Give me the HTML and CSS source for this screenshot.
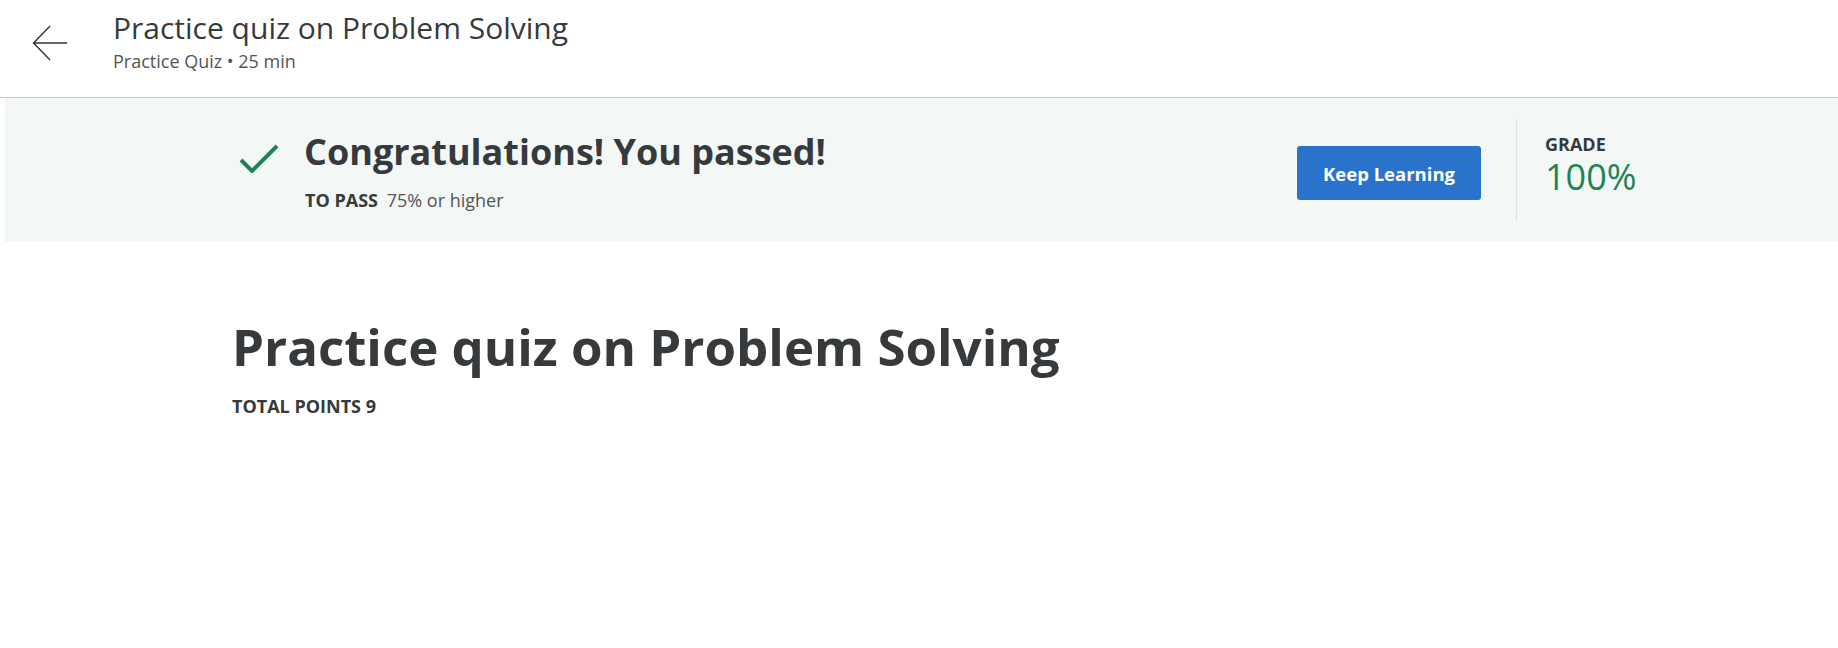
FILE: index.html
```html
<!DOCTYPE html>
<html lang="en">
<head>
<meta charset="utf-8">
<title>Practice quiz on Problem Solving</title>
<link rel="stylesheet" href="styles.css">
</head>
<body>
<header class="top">
  <svg class="back" width="36" height="36" viewBox="0 0 36 36" aria-hidden="true">
    <path d="M35 18H1.5M18 1L1.5 18L18 35" fill="none" stroke="#333" stroke-width="1.4"/>
  </svg>
  <div class="top-text">
    <div class="top-title">Practice quiz on Problem Solving</div>
    <div class="top-sub">Practice Quiz • 25 min</div>
  </div>
</header>
<section class="banner">
  <div class="result">
    <svg class="check" width="40" height="30" viewBox="0 0 40 30" aria-hidden="true">
      <path d="M2 17L13 28L38 3" fill="none" stroke="#1f8354" stroke-width="4"/>
    </svg>
    <div class="result-text">
      <div class="congrats">Congratulations! You passed!</div>
      <div class="topass"><b>TO PASS</b> 75% or higher</div>
    </div>
  </div>
  <button class="keep">Keep Learning</button>
  <div class="divider"></div>
  <div class="grade">
    <div class="grade-label">GRADE</div>
    <div class="grade-value">100%</div>
  </div>
</section>
<main class="content">
  <h1 class="quiz-title">Practice quiz on Problem Solving</h1>
  <div class="points">TOTAL POINTS 9</div>
</main>
</body>
</html>
```
FILE: styles.css
```css
* { box-sizing: border-box; }
body {
  margin: 0;
  font-family: "Open Sans", "Liberation Sans", sans-serif;
  color: #373a3c;
  background: #fff;
}
.top {
  display: flex;
  align-items: flex-start;
  height: 98px;
  padding: 10px 0 0 32px;
  border-bottom: 1px solid #c9c9c9;
}
.back { margin-top: 15px; flex: none; }
.top-text { margin-left: 45px; }
.top-title { font-size: 30px; line-height: 36px; color: #373a3c; }
.top-sub { margin-top: 4px; font-size: 18px; line-height: 22px; color: #545454; }

.banner {
  display: flex;
  align-items: center;
  height: 144px;
  margin-left: 5px;
  padding: 0 173px 0 234px;
  background: #f3f8f7;
}
.result {
  flex: 1;
  display: flex;
  align-items: flex-start;
  padding-top: 2px;
}
.check { flex: none; margin-top: 12px; margin-right: 25px; }
.congrats { font-size: 36px; line-height: 42px; font-weight: 700; }
.topass { margin-top: 16px; font-size: 18px; line-height: 22px; color: #545454; padding-left: 1px; }
.topass b { color: #373a3c; margin-right: 4px; }
.keep {
  flex: none;
  width: 184px;
  height: 54px;
  margin-top: 6px;
  border: none;
  border-radius: 3px;
  background: #2a73cc;
  color: #fff;
  font-family: inherit;
  font-size: 18.5px;
  font-weight: 700;
}
.divider {
  flex: none;
  width: 1px;
  height: 102px;
  margin: 0 28px 0 35px;
  background: #dde3e1;
}
.grade { width: 120px; margin-top: -8px; }
.grade-label { font-size: 18px; line-height: 22px; font-weight: 700; }
.grade-value { font-size: 36px; line-height: 44px; color: #1f8354; }

.content { padding-left: 232px; }
.quiz-title {
  margin: 73px 0 0;
  font-size: 51px;
  line-height: 62px;
  font-weight: 700;
}
.points { margin-top: 18px; font-size: 18px; line-height: 22px; font-weight: 700; }
```
